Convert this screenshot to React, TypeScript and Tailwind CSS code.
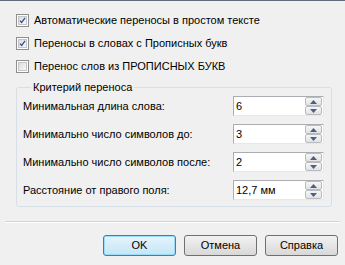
import React from "react";

function CheckBox({ checked }: { checked: boolean }) {
  return (
    <span className="w-[13px] h-[13px] border border-[#8f8f8f] bg-white p-[1px] shrink-0">
      <span className="block w-full h-full border border-[#c6c6c6] bg-gradient-to-br from-[#dcdcdc] to-[#f8f8f8] relative">
        {checked && (
          <svg viewBox="0 0 9 9" className="absolute inset-0 w-full h-full">
            <path d="M1.2 4.6 L3.4 7 L7.8 1.2" fill="none" stroke="#2a4f9e" strokeWidth="1.6" />
          </svg>
        )}
      </span>
    </span>
  );
}

function Spin({ value }: { value: string }) {
  return (
    <div className="flex w-[91px] h-[20px] border border-[#abadb3] border-r-[#e3e9ef] border-b-[#e3e9ef] bg-white">
      <div className="flex-1 pl-[2px] leading-[18px]">{value}</div>
      <div className="flex flex-col w-[18px] pr-[1px]">
        <div className="flex-1 flex items-center justify-center border border-[#b8bcc2] bg-gradient-to-b from-[#f6f6f6] to-[#e2e2e2] rounded-[2px]">
          <svg width="7" height="4" viewBox="0 0 7 4"><path d="M3.5 0 L7 4 L0 4 Z" fill="#4a5f8a" /></svg>
        </div>
        <div className="flex-1 flex items-center justify-center border border-[#b8bcc2] bg-gradient-to-b from-[#f6f6f6] to-[#e2e2e2] rounded-[2px]">
          <svg width="7" height="4" viewBox="0 0 7 4"><path d="M0 0 L7 0 L3.5 4 Z" fill="#4a5f8a" /></svg>
        </div>
      </div>
    </div>
  );
}

const rows = [
  { label: "Минимальная длина слова:", value: "6" },
  { label: "Минимально число символов до:", value: "3" },
  { label: "Минимально число символов после:", value: "2" },
  { label: "Расстояние от правого поля:", value: "12,7 мм" },
];

export default function App() {
  return (
    <div className="w-[345px] h-[265px] bg-[#f0f0f0] border-t border-[#5d6b7a] overflow-hidden text-[11px] text-black font-['Liberation_Sans',sans-serif]">
      <div className="pl-[16px] pt-[8px]">
        <label className="flex items-center gap-[5px] h-[23px]">
          <CheckBox checked />
          <span>Автоматические переносы в простом тексте</span>
        </label>
        <label className="flex items-center gap-[5px] h-[23px]">
          <CheckBox checked />
          <span>Переносы в словах с Прописных букв</span>
        </label>
        <label className="flex items-center gap-[5px] h-[23px]">
          <CheckBox checked={false} />
          <span>Перенос слов из ПРОПИСНЫХ БУКВ</span>
        </label>
      </div>

      <fieldset className="ml-[16px] mr-[13px] mt-[2px] border border-[#d5dfe5] rounded-[3px] pl-[6px] pr-[7px] pb-[6px]">
        <legend className="ml-[8px] px-[2px] leading-[14px]">Критерий переноса</legend>
        <div className="flex flex-col gap-[8px] pt-[2px]">
          {rows.map((r) => (
            <div key={r.label} className="flex items-center justify-between h-[20px]">
              <span>{r.label}</span>
              <Spin value={r.value} />
            </div>
          ))}
        </div>
      </fieldset>

      <div className="mx-[5px] mt-[14px] border-t border-[#d5d5d5] border-b border-b-white" />

      <div className="flex justify-end gap-[8px] pr-[7px] mt-[12px]">
        <button className="w-[73px] h-[21px] rounded-[3px] border border-[#3c7fb1] bg-gradient-to-b from-[#e5f4fc] to-[#c4e5f6] shadow-[inset_0_0_0_1px_#9cdcf8]">
          OK
        </button>
        <button className="w-[73px] h-[21px] rounded-[3px] border border-[#707070] bg-gradient-to-b from-[#f2f2f2] to-[#d8d8d8]">
          Отмена
        </button>
        <button className="w-[73px] h-[21px] rounded-[3px] border border-[#707070] bg-gradient-to-b from-[#f2f2f2] to-[#d8d8d8]">
          Справка
        </button>
      </div>
    </div>
  );
}
